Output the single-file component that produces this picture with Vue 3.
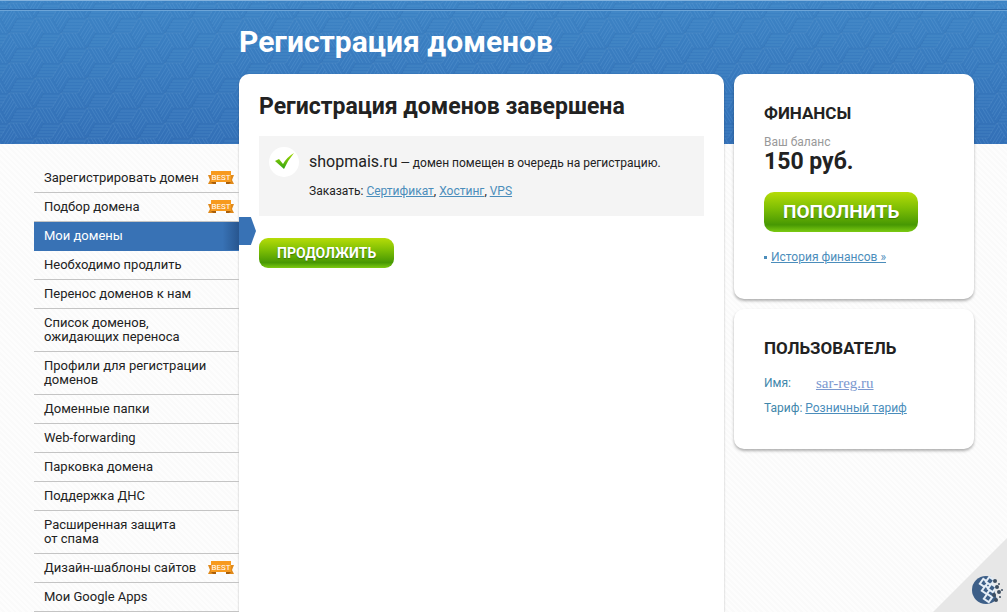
<script setup>
const menu = [
  { label: 'Зарегистрировать домен', best: true },
  { label: 'Подбор домена', best: true },
  { label: 'Мои домены', active: true },
  { label: 'Необходимо продлить' },
  { label: 'Перенос доменов к нам' },
  { label: 'Список доменов,\nожидающих переноса' },
  { label: 'Профили для регистрации\nдоменов' },
  { label: 'Доменные папки' },
  { label: 'Web-forwarding' },
  { label: 'Парковка домена' },
  { label: 'Поддержка ДНС' },
  { label: 'Расширенная защита\nот спама' },
  { label: 'Дизайн-шаблоны сайтов', best: true },
  { label: 'Мои Google Apps' }
]
const cells = [[0, 0], [26, 15], [26, -15], [-26, 15], [-26, -15]]
</script>

<template>
  <div class="page">
    <div class="backdrop" aria-hidden="true">
      <svg class="weave" width="100%" height="100%">
        <defs>
          <g id="cell" fill="none" stroke-width="1">
            <path stroke="#8cc4f0" stroke-opacity=".16" d="M7 3h17M5 6h17M4 9h17M2 12h17M0 15h17" />
            <path stroke="#8cc4f0" stroke-opacity=".15" d="M17 15l9-15M19 18l9-15M21 21l9-15M22 24l9-15M24 27l9-15" />
            <path stroke="#8cc4f0" stroke-opacity=".15" d="M0 15l9 15M4 15l9 15M7 15l9 15M11 15l9 15M14 15l9 15" />
            <path stroke="#1c5aa0" stroke-opacity=".09" d="M9 0h17l-9 15h-17zM17 15l9 15M26 30l9-15l-9-15" />
          </g>
          <pattern id="cubes" x="35" y="2" width="52" height="30" patternUnits="userSpaceOnUse">
            <use v-for="(c, i) in cells" :key="i" href="#cell" :x="c[0]" :y="c[1]" />
          </pattern>
        </defs>
        <rect width="100%" height="100%" fill="url(#cubes)" />
      </svg>
    </div>

    <div class="layout">
      <nav class="sidebar" aria-label="Домены">
        <ul>
          <li v-for="item in menu" :key="item.label" :class="{ active: item.active }">
            <a href="#">
              <span class="label">{{ item.label }}</span>
              <svg v-if="item.best" class="best" width="26" height="14" viewBox="0 0 26 14">
                <path d="M0 4h5v9H0l2-4zM26 4h-5v9h5l-2-4z" fill="#e08a1c" />
                <path d="M3 11l2 2h3v-2zM23 11l-2 2h-3v-2z" fill="#a85f0c" />
                <rect x="3" y="0" width="20" height="11" fill="#f79a1e" />
                <text x="13" y="9" text-anchor="middle" fill="#fff">BEST</text>
              </svg>
            </a>
          </li>
        </ul>
      </nav>

      <div class="content">
        <h1>Регистрация доменов</h1>
        <div class="columns">
          <main>
            <h2>Регистрация доменов завершена</h2>
            <section class="result">
              <svg class="tick" width="30" height="30" viewBox="0 0 30 30">
                <defs>
                  <linearGradient id="tickFill" x1="0" y1="0" x2="0" y2="1">
                    <stop offset="0" stop-color="#a5d800" />
                    <stop offset="1" stop-color="#2fa313" />
                  </linearGradient>
                </defs>
                <circle cx="15" cy="15" r="15" fill="#fff" />
                <path d="M6 14l4-2l4 5Q18 10 25 6Q19 13 15 22z" fill="url(#tickFill)" />
              </svg>
              <div>
                <p><strong>shopmais.ru</strong> — домен помещен в очередь на регистрацию.</p>
                <p class="order">Заказать: <a href="#">Сертификат</a>, <a href="#">Хостинг</a>, <a href="#">VPS</a></p>
              </div>
            </section>
            <button type="button" class="go">ПРОДОЛЖИТЬ</button>
          </main>

          <aside>
            <section class="card finance">
              <h3>ФИНАНСЫ</h3>
              <p class="hint">Ваш баланс</p>
              <p class="sum">150 руб.</p>
              <button type="button" class="go big">ПОПОЛНИТЬ</button>
              <p class="history"><a href="#">История финансов »</a></p>
            </section>
            <section class="card user">
              <h3>ПОЛЬЗОВАТЕЛЬ</h3>
              <p class="name"><span>Имя:</span><a href="#">sar-reg.ru</a></p>
              <p>Тариф: <a href="#">Розничный тариф</a></p>
            </section>
          </aside>
        </div>
      </div>
    </div>

    <a href="#" class="corner" aria-label="WebMoney">
      <svg width="74" height="74" viewBox="0 0 74 74">
        <path d="M74 0v74H0z" fill="#e7e7e7" />
        <circle cx="53" cy="52" r="14" fill="#3d5f88" />
        <path d="M61 36l-4 3l8 26l4-2l4-14l-4-10z" fill="#e7e7e7" />
        <g fill="#3d5f88" stroke="#e4edf6" stroke-width="2">
          <rect x="-3" y="-3" width="6" height="6" transform="translate(51 45) rotate(35)" />
          <rect x="-3" y="-3" width="6" height="6" transform="translate(53 52) rotate(35)" />
          <rect x="-3" y="-3" width="6" height="6" transform="translate(55 60) rotate(35)" />
          <rect x="-3" y="-3" width="6" height="6" transform="translate(57 43) rotate(35)" />
          <rect x="-3" y="-3" width="6" height="6" transform="translate(59 50) rotate(35)" />
        </g>
        <g fill="#3d4d60">
          <circle cx="61" cy="57" r="2" /><circle cx="62" cy="43" r="2" /><circle cx="64" cy="49" r="2" />
          <circle cx="66" cy="54" r="2" /><circle cx="63" cy="62" r="2" /><circle cx="66" cy="46" r="1" />
          <circle cx="69" cy="52" r="1" /><circle cx="67" cy="59" r="1" />
        </g>
      </svg>
    </a>
  </div>
</template>

<style>
body {
  margin: 0;
}
</style>

<style scoped>
.page {
  position: relative;
  display: flex;
  min-height: 100vh;
  overflow: hidden;
  font: 12px/16px Roboto, "Liberation Sans", sans-serif;
  color: #222;
  background: repeating-linear-gradient(45deg, #fdfdfd 0 2px, #fafafa 2px 4px);
}
.backdrop {
  position: absolute;
  inset: 0 0 auto;
  height: 144px;
  background: linear-gradient(#3d84c5, #3370b7);
  border-top: 1px solid #84b3de;
  box-sizing: border-box;
}
.backdrop::after {
  content: "";
  position: absolute;
  inset: 8px 0 auto;
  height: 1px;
  background: #2c68a8;
  border-bottom: 1px solid #6ca5d8;
}
.weave {
  display: block;
}
.layout {
  position: relative;
  flex: 1;
  display: flex;
  padding: 0 33px 0 34px;
}
h1, h2, h3, p, ul {
  margin: 0;
  padding: 0;
}
a {
  color: #4b8dbb;
}
.sidebar {
  position: relative;
  z-index: 1;
  width: 205px;
  padding-top: 164px;
}
.sidebar ul {
  list-style: none;
}
.sidebar li {
  position: relative;
  border-bottom: 1px solid #c4c4c4;
}
.sidebar a {
  display: flex;
  align-items: center;
  justify-content: space-between;
  padding: 7px 5px 7px 10px;
  font-size: 13px;
  line-height: 14px;
  color: #222;
  text-decoration: none;
}
.label {
  white-space: pre-line;
}
.best {
  flex: none;
}
.best text {
  font: 8px Roboto, sans-serif;
}
.sidebar .active {
  border-color: #3872b5;
  background: linear-gradient(90deg, #3872b5 92%, #28568f);
}
.sidebar .active a {
  color: #fff;
}
.active::after {
  content: "";
  position: absolute;
  top: -5px;
  left: 100%;
  width: 17px;
  height: 28px;
  background: #3872b5;
  clip-path: polygon(0 0, 70% 0, 100% 50%, 70% 100%, 0 100%);
}
.content {
  flex: 1;
  display: flex;
  flex-direction: column;
}
h1 {
  padding: 22px 0 12px;
  font-size: 30px;
  line-height: 40px;
  color: #fff;
}
.columns {
  flex: 1;
  display: flex;
  gap: 10px;
}
main {
  flex: 1;
  padding: 20px;
  background: #fff;
  border-radius: 10px 10px 0 0;
  box-shadow: 0 1px 2px rgba(0, 0, 0, .3);
}
h2 {
  font-size: 23px;
  line-height: 26px;
}
.result {
  display: flex;
  gap: 10px;
  margin: 16px 0 22px;
  padding: 11px 10px 12px;
  background: #f4f4f4;
}
.result p {
  line-height: 30px;
}
.result strong {
  font-size: 16px;
  font-weight: 400;
}
.result .order {
  line-height: 26px;
}
.go {
  display: block;
  height: 30px;
  padding: 0 18px;
  border: 0;
  border-radius: 9px;
  font: bold 14px/30px Roboto, sans-serif;
  color: #fff;
  text-shadow: 0 1px 1px #3c7a00;
  background: linear-gradient(#b6dc08, #7fbf04 40%, #479803 82%, #7ccb12);
}
.go.big {
  height: 40px;
  padding: 0 19px;
  border-radius: 10px;
  font-size: 19px;
  line-height: 40px;
}
aside {
  width: 240px;
}
.card {
  box-sizing: border-box;
  padding: 30px;
  border-radius: 10px;
  background: #fff;
  box-shadow: 0 2px 3px rgba(0, 0, 0, .3);
}
.finance {
  min-height: 225px;
  margin-bottom: 10px;
}
h3 {
  font-size: 17px;
  line-height: 18px;
}
.hint {
  margin-top: 12px;
  color: #999;
}
.sum {
  margin-bottom: 18px;
  font-size: 23px;
  line-height: 24px;
  font-weight: 700;
}
.history {
  display: flex;
  align-items: center;
  gap: 4px;
  margin-top: 17px;
}
.history::before {
  content: "";
  width: 3px;
  height: 3px;
  background: #4b8dbb;
}
.user {
  min-height: 140px;
  color: #3f87ab;
}
.user h3 {
  margin-bottom: 18px;
  color: #222;
}
.name {
  display: flex;
  gap: 25px;
  margin-bottom: 9px;
}
.name a {
  font-family: "Liberation Serif", serif;
  font-size: 15px;
  color: #7b98cf;
}
.corner {
  position: absolute;
  right: 0;
  bottom: 0;
}
.corner svg {
  display: block;
}
</style>
